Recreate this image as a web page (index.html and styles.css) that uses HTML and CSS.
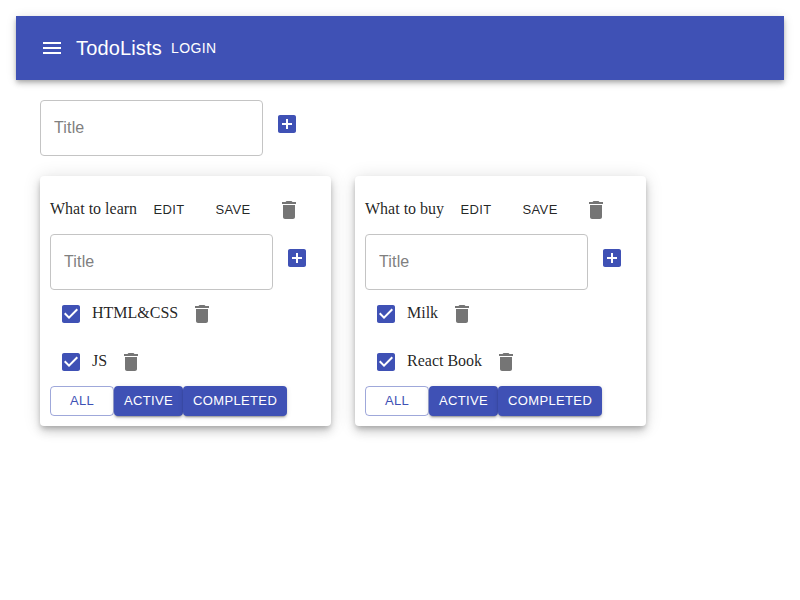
FILE: index.html
```html
<!DOCTYPE html>
<html lang="en">
<head>
<meta charset="utf-8">
<title>TodoLists</title>
<link rel="stylesheet" href="styles.css">
</head>
<body>
<svg class="sprite" aria-hidden="true">
  <symbol id="menu" viewBox="0 0 24 24"><path d="M3 18h18v-2H3v2zm0-5h18v-2H3v2zm0-7v2h18V6H3z"/></symbol>
  <symbol id="add" viewBox="0 0 24 24"><path d="M19 3H5c-1.11 0-2 .9-2 2v14c0 1.1.89 2 2 2h14c1.1 0 2-.9 2-2V5c0-1.1-.9-2-2-2zm-2 10h-4v4h-2v-4H7v-2h4V7h2v4h4v2z"/></symbol>
  <symbol id="trash" viewBox="0 0 24 24"><path d="M6 19c0 1.1.9 2 2 2h8c1.1 0 2-.9 2-2V7H6v12zM19 4h-3.5l-1-1h-5l-1 1H5v2h14V4z"/></symbol>
  <symbol id="check" viewBox="0 0 24 24"><path d="M19 3H5c-1.11 0-2 .9-2 2v14c0 1.1.89 2 2 2h14c1.11 0 2-.9 2-2V5c0-1.1-.89-2-2-2zm-9 14l-5-5 1.41-1.41L10 14.17l7.59-7.59L19 8l-9 9z"/></symbol>
</svg>
<header class="app-bar">
  <button class="icon-button menu-button" aria-label="Menu"><svg class="icon"><use href="#menu"/></svg></button>
  <h1 class="brand">TodoLists</h1>
  <button class="button login">Login</button>
</header>
<main class="content">
  <form class="add-form">
    <input class="field" placeholder="Title">
    <button type="button" class="icon-button primary" aria-label="Add list"><svg class="icon"><use href="#add"/></svg></button>
  </form>
  <div class="lists">
    <section class="card">
      <div class="card-head">
        <span class="label">What to learn</span>
        <button class="button small">Edit</button>
        <button class="button small">Save</button>
        <button class="icon-button" aria-label="Delete list"><svg class="icon"><use href="#trash"/></svg></button>
      </div>
      <form class="add-form">
        <input class="field" placeholder="Title">
        <button type="button" class="icon-button primary" aria-label="Add task"><svg class="icon"><use href="#add"/></svg></button>
      </form>
      <ul class="tasks">
        <li class="task">
          <button class="icon-button primary checkbox" role="checkbox" aria-checked="true" aria-label="Done"><svg class="icon"><use href="#check"/></svg></button>
          <span class="label">HTML&amp;CSS</span>
          <button class="icon-button" aria-label="Delete task"><svg class="icon"><use href="#trash"/></svg></button>
        </li>
        <li class="task">
          <button class="icon-button primary checkbox" role="checkbox" aria-checked="true" aria-label="Done"><svg class="icon"><use href="#check"/></svg></button>
          <span class="label">JS</span>
          <button class="icon-button" aria-label="Delete task"><svg class="icon"><use href="#trash"/></svg></button>
        </li>
      </ul>
      <div class="filters">
        <button class="button small outlined">All</button>
        <button class="button small contained">Active</button>
        <button class="button small contained">Completed</button>
      </div>
    </section>
    <section class="card">
      <div class="card-head">
        <span class="label">What to buy</span>
        <button class="button small">Edit</button>
        <button class="button small">Save</button>
        <button class="icon-button" aria-label="Delete list"><svg class="icon"><use href="#trash"/></svg></button>
      </div>
      <form class="add-form">
        <input class="field" placeholder="Title">
        <button type="button" class="icon-button primary" aria-label="Add task"><svg class="icon"><use href="#add"/></svg></button>
      </form>
      <ul class="tasks">
        <li class="task">
          <button class="icon-button primary checkbox" role="checkbox" aria-checked="true" aria-label="Done"><svg class="icon"><use href="#check"/></svg></button>
          <span class="label">Milk</span>
          <button class="icon-button" aria-label="Delete task"><svg class="icon"><use href="#trash"/></svg></button>
        </li>
        <li class="task">
          <button class="icon-button primary checkbox" role="checkbox" aria-checked="true" aria-label="Done"><svg class="icon"><use href="#check"/></svg></button>
          <span class="label">React Book</span>
          <button class="icon-button" aria-label="Delete task"><svg class="icon"><use href="#trash"/></svg></button>
        </li>
      </ul>
      <div class="filters">
        <button class="button small outlined">All</button>
        <button class="button small contained">Active</button>
        <button class="button small contained">Completed</button>
      </div>
    </section>
  </div>
</main>
</body>
</html>
```
FILE: styles.css
```css
* { box-sizing: border-box; }

body {
  min-height: 100vh;
  margin: 0;
  padding: 16px;
  background: #fff;
  color: #000;
  font: 16px "Liberation Serif", "Times New Roman", serif;
}

.sprite { display: none; }

.icon {
  display: block;
  width: 24px;
  height: 24px;
  fill: currentColor;
}

.app-bar {
  display: flex;
  align-items: center;
  height: 64px;
  padding: 0 24px;
  background: #3f51b5;
  color: #fff;
  box-shadow: 0 2px 4px -1px rgba(0,0,0,.2), 0 4px 5px 0 rgba(0,0,0,.14), 0 1px 10px 0 rgba(0,0,0,.12);
}

.brand {
  margin: 0;
  font: 400 20px/32px "Liberation Sans", Arial, sans-serif;
  letter-spacing: .15px;
}

.icon-button {
  flex: none;
  padding: 12px;
  border: 0;
  background: none;
  color: #757575;
}

.menu-button { margin-left: -12px; color: inherit; }
.primary { color: #3f51b5; }
.checkbox { padding: 9px; }

.button {
  min-width: 64px;
  padding: 6px 8px;
  border: 0;
  border-radius: 4px;
  background: none;
  color: rgba(0,0,0,.87);
  font: 400 14px/24.5px "Liberation Sans", Arial, sans-serif;
  letter-spacing: .4px;
  text-transform: uppercase;
}

.login { color: #fff; }

.content { padding: 20px 24px 0; }

.add-form { display: flex; height: 56px; }

.add-form .icon-button { height: 48px; }

.field {
  width: 223px;
  height: 56px;
  padding: 0 14px 0 13px;
  border: 1px solid #c4c4c4;
  border-radius: 4px;
  background: none;
  font: 16px "Liberation Sans", Arial, sans-serif;
  letter-spacing: .15px;
}

.field::placeholder { color: #808080; opacity: 1; }

.lists { display: flex; gap: 24px; margin-top: 20px; }

.card {
  width: 291px;
  height: 250px;
  padding: 10px;
  border-radius: 4px;
  background: #fff;
  color: rgba(0,0,0,.87);
  box-shadow: 0 3px 5px -1px rgba(0,0,0,.2), 0 6px 10px 0 rgba(0,0,0,.14), 0 1px 18px 0 rgba(0,0,0,.12);
}

.card-head { display: flex; align-items: center; height: 48px; }
.label { padding-bottom: 2px; line-height: 18px; }
.card-head .button { padding-bottom: 6px; }

.tasks { margin: 0; padding: 0; list-style: none; }
.task { display: flex; align-items: center; height: 48px; }

.filters { display: flex; }

.small {
  height: 30px;
  padding: 4px 10px;
  font-size: 13px;
  line-height: 22px;
  letter-spacing: .35px;
}

.outlined {
  padding: 3px 9px;
  border: 1px solid rgba(63,81,181,.5);
  color: #3f51b5;
}

.contained {
  background: #3f51b5;
  color: #fff;
  box-shadow: 0 3px 1px -2px rgba(0,0,0,.2), 0 2px 2px 0 rgba(0,0,0,.14), 0 1px 5px 0 rgba(0,0,0,.12);
}
```
